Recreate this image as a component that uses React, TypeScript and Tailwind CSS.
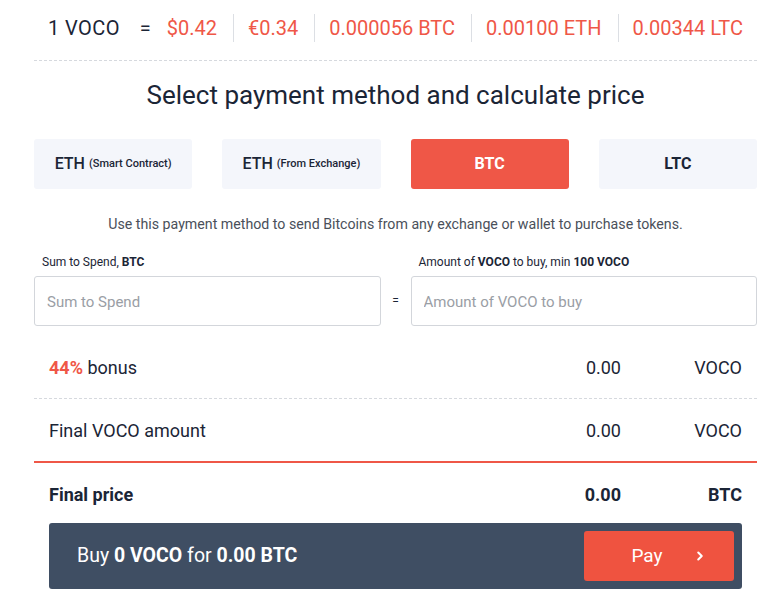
const RED = "text-[#ef5747]";

function Rate({ children, first }: { children: React.ReactNode; first?: boolean }) {
  return (
    <span
      className={`${RED} ${
        first ? "pl-0 pr-[16px]" : "border-l border-[#dcdfe4] pl-[14px] pr-[16px]"
      } leading-[28px] last:pr-0`}
    >
      {children}
    </span>
  );
}

function MethodButton({
  label,
  note,
  active,
}: {
  label: string;
  note?: string;
  active?: boolean;
}) {
  return (
    <button
      type="button"
      className={`flex h-[50px] items-center justify-center rounded-[3px] text-[16px] ${
        active
          ? "bg-[#ef5747] font-bold text-white"
          : "bg-[#f4f6fb] text-[#1b2536]"
      } ${note ? "font-medium" : "font-bold"}`}
    >
      {label}
      {note && <span className="ml-1 text-[11px]">{note}</span>}
    </button>
  );
}

function SummaryRow({
  label,
  value,
  unit,
  bold,
}: {
  label: React.ReactNode;
  value: string;
  unit: string;
  bold?: boolean;
}) {
  return (
    <div
      className={`flex h-[62px] items-center px-[15px] text-[18px] ${
        bold ? "font-bold" : ""
      } text-[#1b2536]`}
    >
      <div className="flex-1">{label}</div>
      <div className="w-[60px] text-right">{value}</div>
      <div className="w-[121px] text-right">{unit}</div>
    </div>
  );
}

function ChevronIcon() {
  return (
    <svg
      aria-hidden="true"
      viewBox="0 0 24 24"
      className="h-[14px] w-[14px]"
      fill="none"
      stroke="currentColor"
      strokeWidth="3.5"
      strokeLinecap="round"
      strokeLinejoin="round"
    >
      <path d="m9 6 6 6-6 6" />
    </svg>
  );
}

export default function App() {
  return (
    <div
      className="h-[613px] w-[775px] overflow-hidden bg-white pl-[34px] pr-[18px] text-[#1b2536]"
      style={{ fontFamily: "Roboto, 'Liberation Sans', sans-serif" }}
    >
      <div className="flex h-[61px] items-center justify-center whitespace-nowrap border-b border-dashed border-[#d6d9de] pb-[4px] text-[20px]">
        <span className="pr-[20px] tracking-[0.4px]">1 VOCO</span>
        <span className="pr-[16px]">=</span>
        <Rate first>$0.42</Rate>
        <Rate>€0.34</Rate>
        <Rate>0.000056 BTC</Rate>
        <Rate>0.00100 ETH</Rate>
        <Rate>0.00344 LTC</Rate>
      </div>

      <h2 className="mt-[18px] text-center text-[26px] leading-[32px]">
        Select payment method and calculate price
      </h2>

      <div className="mt-[28px] grid grid-cols-4 gap-[30px]">
        <MethodButton label="ETH" note="(Smart Contract)" />
        <MethodButton label="ETH" note="(From Exchange)" />
        <MethodButton label="BTC" active />
        <MethodButton label="LTC" />
      </div>

      <p className="mt-[25px] text-center text-[14.2px] leading-[20px] text-[#4a505a]">
        Use this payment method to send Bitcoins from any exchange or wallet to
        purchase tokens.
      </p>

      <div className="mt-[21px] flex items-end">
        <div className="flex-1">
          <div className="mb-[7px] pl-[8px] text-[12px] leading-[14px]">
            Sum to Spend, <b>BTC</b>
          </div>
          <input
            placeholder="Sum to Spend"
            className="h-[50px] w-full rounded-[3px] border border-[#d3d6db] px-[12px] pt-[2px] text-[15px] placeholder:text-[#9a9ea5] outline-none"
          />
        </div>
        <div className="flex h-[50px] w-[30px] items-center justify-center text-[12px]">
          =
        </div>
        <div className="flex-1">
          <div className="mb-[7px] pl-[8px] text-[12px] leading-[14px]">
            Amount of <b>VOCO</b> to buy, min <b>100 VOCO</b>
          </div>
          <input
            placeholder="Amount of VOCO to buy"
            className="h-[50px] w-full rounded-[3px] border border-[#d3d6db] px-[12px] pt-[2px] text-[15px] placeholder:text-[#9a9ea5] outline-none"
          />
        </div>
      </div>

      <div className="mt-[10px]">
        <SummaryRow
          label={
            <>
              <span className={`font-bold ${RED}`}>44%</span> bonus
            </>
          }
          value="0.00"
          unit="VOCO"
        />
        <div className="border-t border-dashed border-[#d6d9de]" />
        <SummaryRow label="Final VOCO amount" value="0.00" unit="VOCO" />
        <div className="border-t-2 border-[#ef5747]" />
        <SummaryRow label="Final price" value="0.00" unit="BTC" bold />
      </div>

      <div className="mx-[15px] mt-[-2px] flex h-[66px] items-center rounded-[3px] bg-[#3f4e63] pl-[28px] pr-[8px]">
        <div className="flex-1 text-[19.5px] text-white">
          Buy <b>0 VOCO</b> for <b>0.00 BTC</b>
        </div>
        <button
          type="button"
          className="flex h-[50px] w-[150px] items-center justify-center gap-[30px] rounded-[3px] bg-[#ef5340] pl-[20px] text-[19px] text-white"
        >
          Pay
          <ChevronIcon />
        </button>
      </div>
    </div>
  );
}
